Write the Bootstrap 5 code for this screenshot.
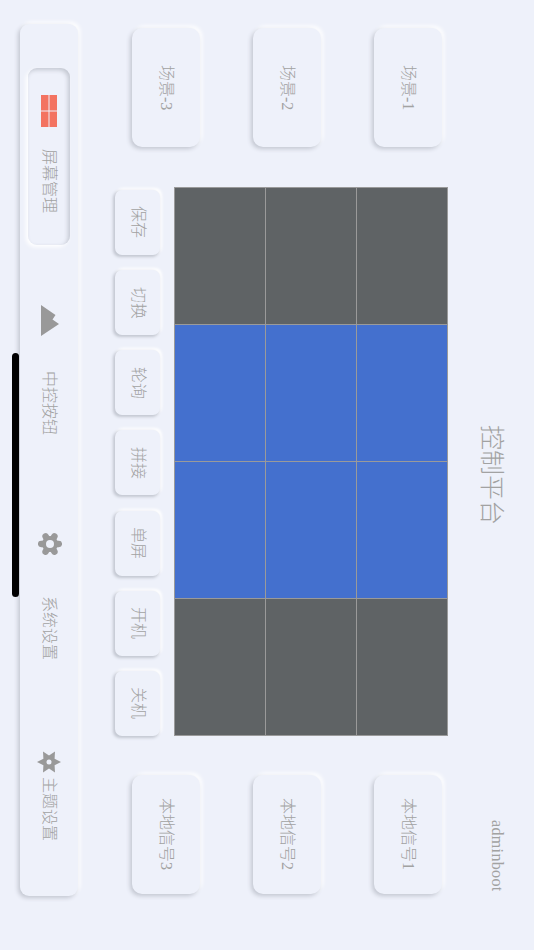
<!doctype html>
<html lang="zh">
<head>
<meta charset="utf-8">
<link href="https://cdn.jsdelivr.net/npm/bootstrap@5.3.0/dist/css/bootstrap.min.css" rel="stylesheet">
<style>
html,body{margin:0;padding:0;height:100%;background:#eef1fa;overflow:hidden}
body{font-family:"Liberation Serif","Noto Sans CJK SC",serif;color:#a2a2a2;font-weight:300}
.stage{writing-mode:vertical-rl;text-orientation:sideways;width:534px;height:950px;position:relative;background:#eef1fa;opacity:.999}
.head{width:86px;height:950px;display:grid;grid-template-columns:1fr auto 1fr;align-items:start;flex:none}
.title{font-size:25px;line-height:1;grid-column:2;margin-right:30px}
.brand{font-size:16px;letter-spacing:.35px;line-height:1;grid-column:3;justify-self:end;margin-right:29px;margin-bottom:58px}
.body-row{width:448px;height:950px;flex:none}
.rail{width:310px;flex:none;gap:53px;margin-right:6px}
.rail-a{margin-top:28px}
.rail-b{margin-top:39px}
.tile{width:68px;height:119px;border-radius:10px;font-size:16px;background:#eef1fa;box-shadow:-2px 2px 4px #c3c7d1,2px -2px 4px #fff}
.center{width:333px;flex:none;margin-top:40px}
.wall{width:274px;height:549px;display:grid;grid-template-columns:repeat(4,1fr);grid-template-rows:repeat(3,1fr);background:#9a9a9a;border:1.5px solid #9a9a9a;gap:1.5px}
.wall-g{background:#5f6365}
.wall-b{background:#4470ce}
.keys{width:45px;height:546px;margin-right:14px;margin-top:3px}
.key{width:45px;height:65px;border-radius:7px;font-size:16px;background:#eef1fa;box-shadow:-1.5px 1.5px 3px #c3c7d1,1.5px -1.5px 3px #fff}
.side{position:absolute;left:20px;top:24px;width:58px;height:872px;border-radius:9px;background:#eef1fa;box-shadow:-2px 2px 4px #c3c7d1,2px -2px 4px #fff}
.it{font-size:16px;flex:none;width:42px}
.it svg{display:block;flex:none}
.it1{margin-top:44px;height:177px;border-radius:9px;padding-top:27px;box-shadow:inset -2px 2px 4px #c3c7d1,-2px 2px 4px #fff}
.it2{margin-top:60px}
.it3{margin-top:97px}
.it4{margin-top:91px}
.nudge{margin-left:2px}
.gap-23{margin-top:22px}
.gap-36{margin-top:35px}
.gap-41{margin-top:40px}
.gap-7{margin-top:4px}
.home{position:absolute;left:12px;top:353px;width:7px;height:244px;border-radius:4px;background:#000}
</style>
</head>
<body>
<div class="stage d-flex flex-column">
  <div class="head">
    <div class="title">控制平台</div>
    <div class="brand">adminboot</div>
  </div>
  <div class="body-row d-flex">
    <div class="rail rail-a d-flex flex-column">
      <div class="tile d-flex align-items-center justify-content-center">场景-1</div>
      <div class="tile d-flex align-items-center justify-content-center">场景-2</div>
      <div class="tile d-flex align-items-center justify-content-center">场景-3</div>
    </div>
    <div class="center d-flex flex-column">
      <div class="wall">
        <div class="wall-g"></div><div class="wall-b"></div><div class="wall-b"></div><div class="wall-g"></div>
        <div class="wall-g"></div><div class="wall-b"></div><div class="wall-b"></div><div class="wall-g"></div>
        <div class="wall-g"></div><div class="wall-b"></div><div class="wall-b"></div><div class="wall-g"></div>
      </div>
      <div class="keys d-flex justify-content-between">
        <div class="key d-flex align-items-center justify-content-center">保存</div>
        <div class="key d-flex align-items-center justify-content-center">切换</div>
        <div class="key d-flex align-items-center justify-content-center">轮询</div>
        <div class="key d-flex align-items-center justify-content-center">拼接</div>
        <div class="key d-flex align-items-center justify-content-center">单屏</div>
        <div class="key d-flex align-items-center justify-content-center">开机</div>
        <div class="key d-flex align-items-center justify-content-center">关机</div>
      </div>
    </div>
    <div class="rail rail-b d-flex flex-column">
      <div class="tile d-flex align-items-center justify-content-center">本地信号1</div>
      <div class="tile d-flex align-items-center justify-content-center">本地信号2</div>
      <div class="tile d-flex align-items-center justify-content-center">本地信号3</div>
    </div>
  </div>
  <nav class="side d-flex align-items-center">
    <div class="it it1 d-flex align-items-center">
      <svg width="16" height="32" viewBox="0 0 16 32"><path fill="#f37361" d="M0 0h7.500v15.500H0zM8.500 0H16v15.500H8.500zM0 16.500h7.500V32H0zM8.500 16.500H16V32H8.500z"/></svg>
      <span class="gap-23">屏幕管理</span>
    </div>
    <div class="it it2 d-flex align-items-center">
      <svg class="nudge" width="18" height="31" viewBox="0 0 18 31"><path fill="#999" d="M0 0L14.500 10L11.500 14.500L18 19L0 31Z"/></svg>
      <span class="gap-36">中控按钮</span>
    </div>
    <div class="it it3 d-flex align-items-center">
      <svg class="nudge" width="24" height="24" viewBox="0 0 24 24"><g stroke="#999" stroke-width="6.500" stroke-linecap="round" fill="none"><path d="M3.200 12H20.800M7.600 4.400L16.400 19.600M16.400 4.400L7.600 19.600"/></g><circle cx="12" cy="12" r="8" fill="#999"/><circle cx="12" cy="12" r="4" fill="#eef1fa"/></svg>
      <span class="gap-41">系统设置</span>
    </div>
    <div class="it it4 d-flex align-items-center">
      <svg width="24" height="22" viewBox="0 0 24 22"><path fill="#999" d="M24 11L17.600 14.250L18 21.400L12 17.500L6 21.400L6.400 14.250L0 11L6.400 7.750L6 .6L12 4.500L18 .6L17.600 7.750Z"/><circle cx="12" cy="11" r="2.500" fill="#eef1fa"/></svg>
      <span class="gap-7">主题设置</span>
    </div>
  </nav>
  <div class="home"></div>
</div>
<script src="https://cdn.jsdelivr.net/npm/bootstrap@5.3.0/dist/js/bootstrap.bundle.min.js"></script>
</body>
</html>
